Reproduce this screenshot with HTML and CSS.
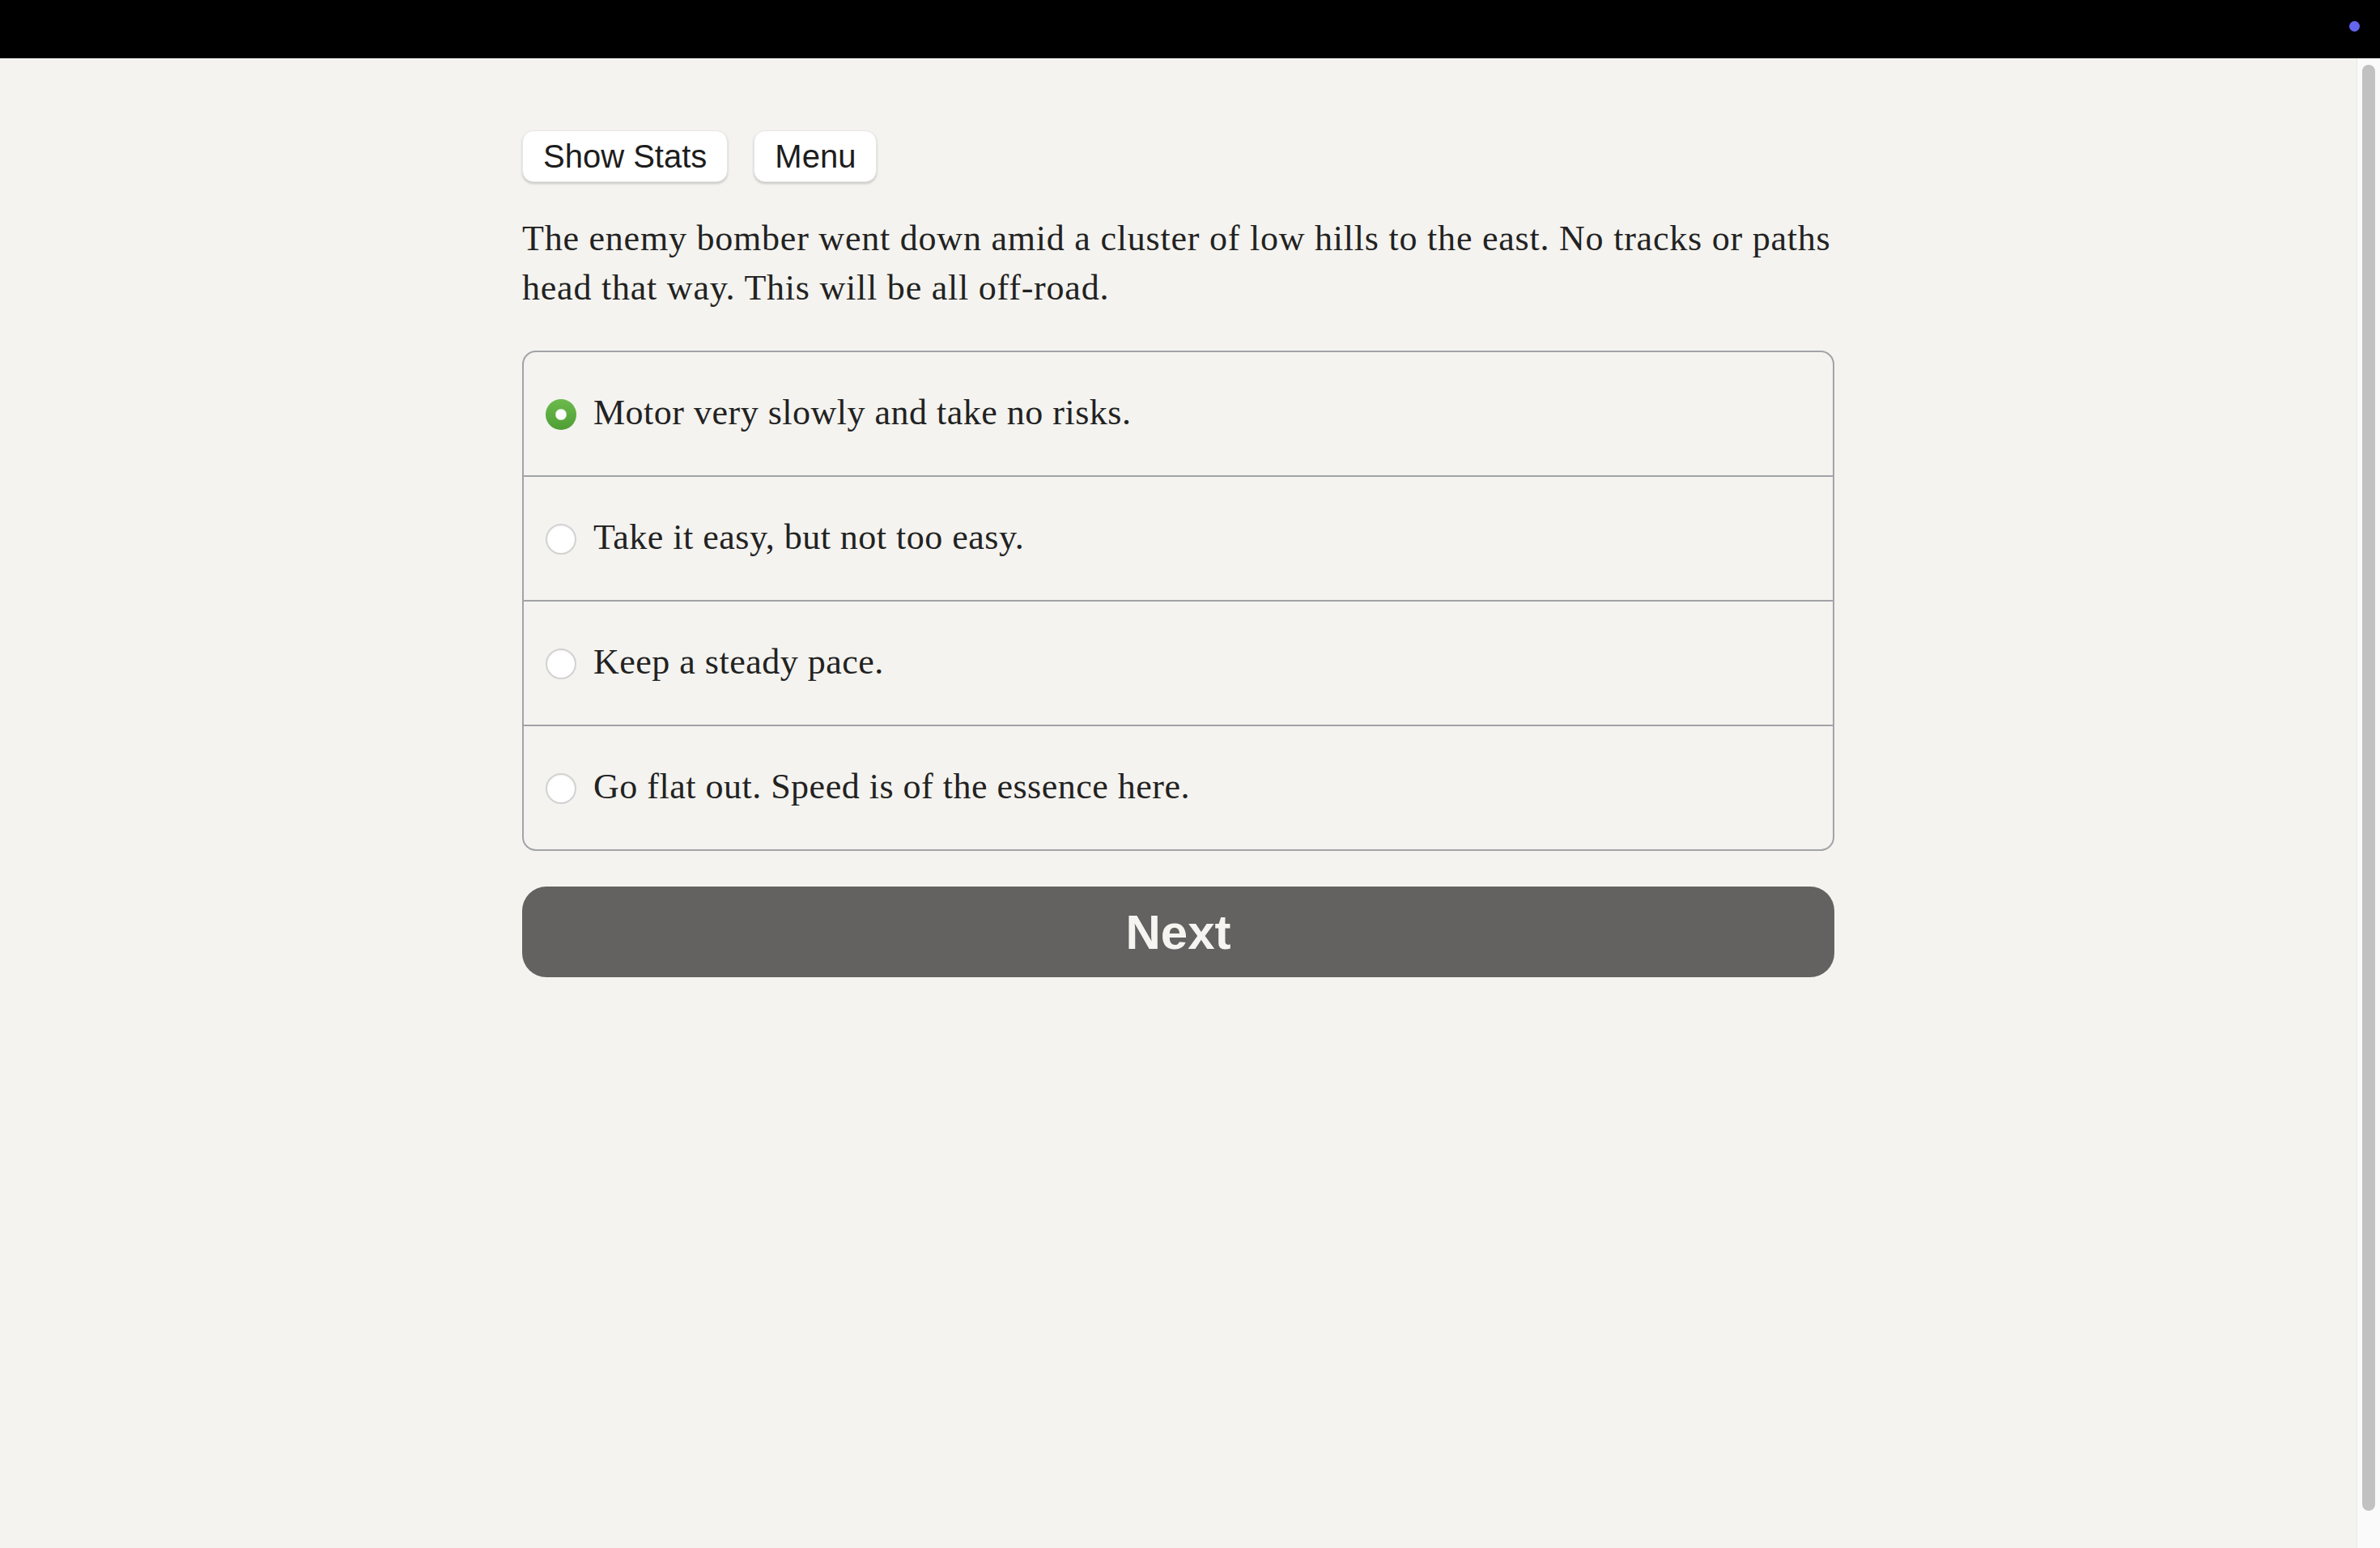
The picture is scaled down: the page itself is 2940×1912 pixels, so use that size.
FILE: index.html
```html
<!DOCTYPE html>
<html lang="en">
<head>
<meta charset="utf-8">
<title>Off-road</title>
<link rel="stylesheet" href="styles.css">
</head>
<body>
<header class="topbar"><span class="dot"></span></header>
<div class="viewport">
  <main class="main">
    <div class="content">
      <div class="toolbar">
        <button class="btn">Show Stats</button>
        <button class="btn">Menu</button>
      </div>
      <p class="story">The enemy bomber went down amid a cluster of low hills to the east. No tracks or paths head that way. This will be all off-road.</p>
      <form class="choices">
        <label class="choice"><input type="radio" name="c" class="radio" checked><span>Motor very slowly and take no risks.</span></label>
        <label class="choice"><input type="radio" name="c" class="radio"><span>Take it easy, but not too easy.</span></label>
        <label class="choice"><input type="radio" name="c" class="radio"><span>Keep a steady pace.</span></label>
        <label class="choice"><input type="radio" name="c" class="radio"><span>Go flat out. Speed is of the essence here.</span></label>
      </form>
      <button class="next">Next</button>
    </div>
  </main>
  <div class="scrollbar"><div class="thumb"></div></div>
</div>
</body>
</html>
```
FILE: styles.css
```css
html, body {
  margin: 0;
  padding: 0;
}
body {
  background: #f4f3ef;
  height: 1912px;
  overflow: hidden;
  font-family: "Liberation Serif", "Times New Roman", serif;
}
.topbar {
  height: 72px;
  background: #000;
  display: flex;
  justify-content: flex-end;
  align-items: flex-start;
  padding: 26px 25px 0 0;
  box-sizing: border-box;
}
.dot {
  width: 13px;
  height: 13px;
  border-radius: 50%;
  background: #6466ee;
}
.viewport {
  display: flex;
  height: 1840px;
}
.main {
  flex: 1;
}
.content {
  width: 1621px;
  margin: 0 auto;
  padding-top: 89px;
}
.toolbar {
  display: flex;
  gap: 32px;
}
.btn {
  font-family: "Liberation Sans", Arial, sans-serif;
  font-size: 40px;
  height: 64px;
  padding: 0 25px;
  background: #fff;
  color: #1d1d1d;
  border: 1px solid #e6e6e6;
  border-radius: 14px;
  box-shadow: 0 2px 3px rgba(0, 0, 0, 0.18);
  line-height: 1;
}
.story {
  margin: 39px 0 0;
  font-size: 44px;
  line-height: 61px;
  letter-spacing: 0.78px;
  color: #222;
}
.choices {
  margin-top: 47px;
  border: 2px solid #a2a3a8;
  border-radius: 17px;
  display: flex;
  flex-direction: column;
}
.choice {
  height: 152px;
  display: flex;
  align-items: center;
  gap: 21px;
  padding: 0 0 4px 27px;
  box-sizing: border-box;
  font-size: 44px;
  letter-spacing: 0.5px;
  color: #222;
}
.choice + .choice {
  border-top: 2px solid #a2a3a8;
  height: 154px;
}
.radio {
  appearance: none;
  -webkit-appearance: none;
  margin: 6px 0 0;
  width: 38px;
  height: 38px;
  flex: none;
  border-radius: 50%;
  border: 2px solid #d2d2d2;
  background: #fff;
  box-shadow: inset 0 1px 2px rgba(0, 0, 0, 0.06);
  box-sizing: border-box;
}
.radio:checked {
  border: none;
  box-shadow: none;
  background:
    radial-gradient(circle, #fff 0 6px, rgba(255,255,255,0) 7.5px),
    linear-gradient(#6cba4d, #4f9e35);
}
.next {
  display: block;
  width: 100%;
  margin-top: 44px;
  height: 112px;
  border: none;
  border-radius: 30px;
  background: #636260;
  color: #f5f4f0;
  font-family: "Liberation Sans", Arial, sans-serif;
  font-weight: bold;
  font-size: 60px;
}
.scrollbar {
  width: 29px;
  box-sizing: border-box;
  background: #fafafa;
  border-left: 1px solid #e8e8e8;
  padding: 8px 6px 46px;
  display: flex;
}
.thumb {
  flex: 1;
  border-radius: 8px;
  background: #c1c1c1;
}
```
